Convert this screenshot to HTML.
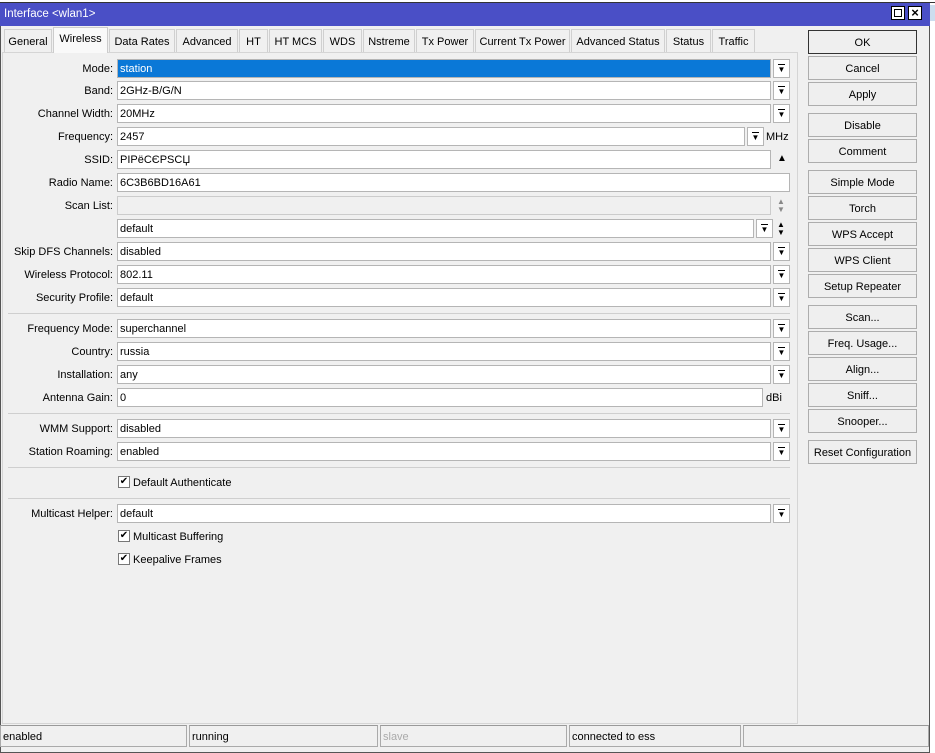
<!DOCTYPE html>
<html><head><meta charset="utf-8"><style>
*{box-sizing:border-box}
body{margin:0;width:935px;height:753px;overflow:hidden;background:#fff;font-family:"Liberation Sans",sans-serif;font-size:11px;color:#000;position:relative}
.a{position:absolute}
#win{left:0;top:3px;width:930px;height:750px;background:#f0f0f0;border:1px solid #555}
#title{left:0;top:3px;width:930px;height:23px;background:#4a4fc6;color:#fff;font-size:11.5px;padding:5px 0 0 4px}
.tab{position:absolute;top:29px;height:23px;border:1px solid #d0d0d0;border-bottom:none;background:#f0f0f0;padding:6px 0 0;text-align:center}
.tab.sel{top:27px;height:26px;background:#f9f9f9;border-color:#ccc;z-index:2;padding-top:5px}
#panel{left:2px;top:52px;width:796px;height:672px;border:1px solid #d5d5d5;background:#f0f0f0}
.lbl{position:absolute;right:822px;text-align:right;white-space:nowrap;margin-top:1px}
.fld{position:absolute;left:117px;height:19px;background:#fff;border:1px solid #b5b5b5;padding:3px 0 0 2px;white-space:nowrap}
.dd{position:absolute;left:773px;width:17px;height:19px;background:#fff;border:1px solid #b5b5b5;font-size:8px;text-align:center;line-height:15px}
.dd::before{content:"";display:block;width:7px;height:1px;background:#000;margin:4px auto 0}
.dd{line-height:9px}
.sep{position:absolute;left:8px;width:782px;height:1px;background:#cfcfcf}
.btn{position:absolute;left:808px;width:109px;height:24px;border:1px solid #adadad;background:#efefef;text-align:center;padding-top:6px}
.cb{position:absolute;left:118px;width:12px;height:12px;border:1px solid #777;background:#fff;font-size:10px;line-height:10px;text-align:center}
.cbl{position:absolute;left:133px;margin-top:1px}
.st{position:absolute;top:725px;height:22px;border:1px solid #aaa;border-top-color:#999;background:#f0f0f0;padding:5px 0 0 2px}
</style></head><body>
<div class="a" style="left:0;top:0;width:935px;height:3px;background:#fff;border-bottom:1px solid #333"></div>
<div class="a" id="win"></div>
<div class="a" id="title">Interface &lt;wlan1&gt;</div>
<div class="a" style="left:891px;top:6px;width:14px;height:14px;background:#fff;border:1px solid #000"><div style="margin:2px;width:8px;height:8px;border:1px solid #000"></div></div>
<div class="a" style="left:908px;top:6px;width:14px;height:14px;background:#fff;border:1px solid #000;font-size:13px;font-weight:bold;line-height:12px;text-align:center">×</div>
<div class="a" style="left:930px;top:5px;width:5px;height:16px;background:#cde"></div>

<div class="tab" style="left:4px;width:48px">General</div>
<div class="tab sel" style="left:53px;width:55px">Wireless</div>
<div class="tab" style="left:109px;width:66px">Data Rates</div>
<div class="tab" style="left:176px;width:62px">Advanced</div>
<div class="tab" style="left:239px;width:29px">HT</div>
<div class="tab" style="left:269px;width:53px">HT MCS</div>
<div class="tab" style="left:323px;width:39px">WDS</div>
<div class="tab" style="left:363px;width:52px">Nstreme</div>
<div class="tab" style="left:416px;width:58px">Tx Power</div>
<div class="tab" style="left:475px;width:95px">Current Tx Power</div>
<div class="tab" style="left:571px;width:94px">Advanced Status</div>
<div class="tab" style="left:666px;width:45px">Status</div>
<div class="tab" style="left:712px;width:43px">Traffic</div>
<div class="a" id="panel"></div>

<div class="lbl" style="top:62px">Mode:</div><div class="fld" style="top:59px;width:654px;background:#0a78d7;color:#fff">station</div><div class="dd" style="top:59px">▼</div>
<div class="lbl" style="top:84px">Band:</div><div class="fld" style="top:81px;width:654px">2GHz-B/G/N</div><div class="dd" style="top:81px">▼</div>
<div class="lbl" style="top:107px">Channel Width:</div><div class="fld" style="top:104px;width:654px">20MHz</div><div class="dd" style="top:104px">▼</div>
<div class="lbl" style="top:130px">Frequency:</div><div class="fld" style="top:127px;width:628px">2457</div><div class="dd" style="top:127px;left:747px">▼</div><div class="a" style="left:766px;top:131px">MHz</div>
<div class="lbl" style="top:153px">SSID:</div><div class="fld" style="top:150px;width:654px">PIPёCЄPSCЏ</div><div class="a" style="left:777px;top:153px;font-size:10px">▲</div>
<div class="lbl" style="top:176px">Radio Name:</div><div class="fld" style="top:173px;width:673px">6C3B6BD16A61</div>
<div class="lbl" style="top:199px">Scan List:</div><div class="fld" style="top:196px;width:654px;background:#f0f0f0;border-color:#ccc"></div><div class="a" style="left:777px;top:198px;font-size:8px;line-height:8px;color:#888">▲<br>▼</div>
<div class="fld" style="top:219px;width:637px">default</div><div class="dd" style="top:219px;left:756px">▼</div><div class="a" style="left:777px;top:221px;font-size:8px;line-height:8px">▲<br>▼</div>
<div class="lbl" style="top:245px">Skip DFS Channels:</div><div class="fld" style="top:242px;width:654px">disabled</div><div class="dd" style="top:242px">▼</div>
<div class="lbl" style="top:268px">Wireless Protocol:</div><div class="fld" style="top:265px;width:654px">802.11</div><div class="dd" style="top:265px">▼</div>
<div class="lbl" style="top:291px">Security Profile:</div><div class="fld" style="top:288px;width:654px">default</div><div class="dd" style="top:288px">▼</div>
<div class="sep" style="top:313px"></div>
<div class="lbl" style="top:322px">Frequency Mode:</div><div class="fld" style="top:319px;width:654px">superchannel</div><div class="dd" style="top:319px">▼</div>
<div class="lbl" style="top:345px">Country:</div><div class="fld" style="top:342px;width:654px">russia</div><div class="dd" style="top:342px">▼</div>
<div class="lbl" style="top:368px">Installation:</div><div class="fld" style="top:365px;width:654px">any</div><div class="dd" style="top:365px">▼</div>
<div class="lbl" style="top:391px">Antenna Gain:</div><div class="fld" style="top:388px;width:646px">0</div><div class="a" style="left:766px;top:392px">dBi</div>
<div class="sep" style="top:413px"></div>
<div class="lbl" style="top:422px">WMM Support:</div><div class="fld" style="top:419px;width:654px">disabled</div><div class="dd" style="top:419px">▼</div>
<div class="lbl" style="top:445px">Station Roaming:</div><div class="fld" style="top:442px;width:654px">enabled</div><div class="dd" style="top:442px">▼</div>
<div class="sep" style="top:467px"></div>
<div class="cb" style="top:476px">✔</div><div class="cbl" style="top:476px">Default Authenticate</div>
<div class="sep" style="top:498px"></div>
<div class="lbl" style="top:507px">Multicast Helper:</div><div class="fld" style="top:504px;width:654px">default</div><div class="dd" style="top:504px">▼</div>
<div class="cb" style="top:530px">✔</div><div class="cbl" style="top:530px">Multicast Buffering</div>
<div class="cb" style="top:553px">✔</div><div class="cbl" style="top:553px">Keepalive Frames</div>

<div class="btn" style="top:30px;border:1px solid #333">OK</div>
<div class="btn" style="top:56px">Cancel</div>
<div class="btn" style="top:82px">Apply</div>
<div class="btn" style="top:113px">Disable</div>
<div class="btn" style="top:139px">Comment</div>
<div class="btn" style="top:170px">Simple Mode</div>
<div class="btn" style="top:196px">Torch</div>
<div class="btn" style="top:222px">WPS Accept</div>
<div class="btn" style="top:248px">WPS Client</div>
<div class="btn" style="top:274px">Setup Repeater</div>
<div class="btn" style="top:305px">Scan...</div>
<div class="btn" style="top:331px">Freq. Usage...</div>
<div class="btn" style="top:357px">Align...</div>
<div class="btn" style="top:383px">Sniff...</div>
<div class="btn" style="top:409px">Snooper...</div>
<div class="btn" style="top:440px">Reset Configuration</div>

<div class="st" style="left:0;width:187px">enabled</div>
<div class="st" style="left:189px;width:189px">running</div>
<div class="st" style="left:380px;width:187px;color:#aaa">slave</div>
<div class="st" style="left:569px;width:172px">connected to ess</div>
<div class="st" style="left:743px;width:186px"></div>
</body></html>
